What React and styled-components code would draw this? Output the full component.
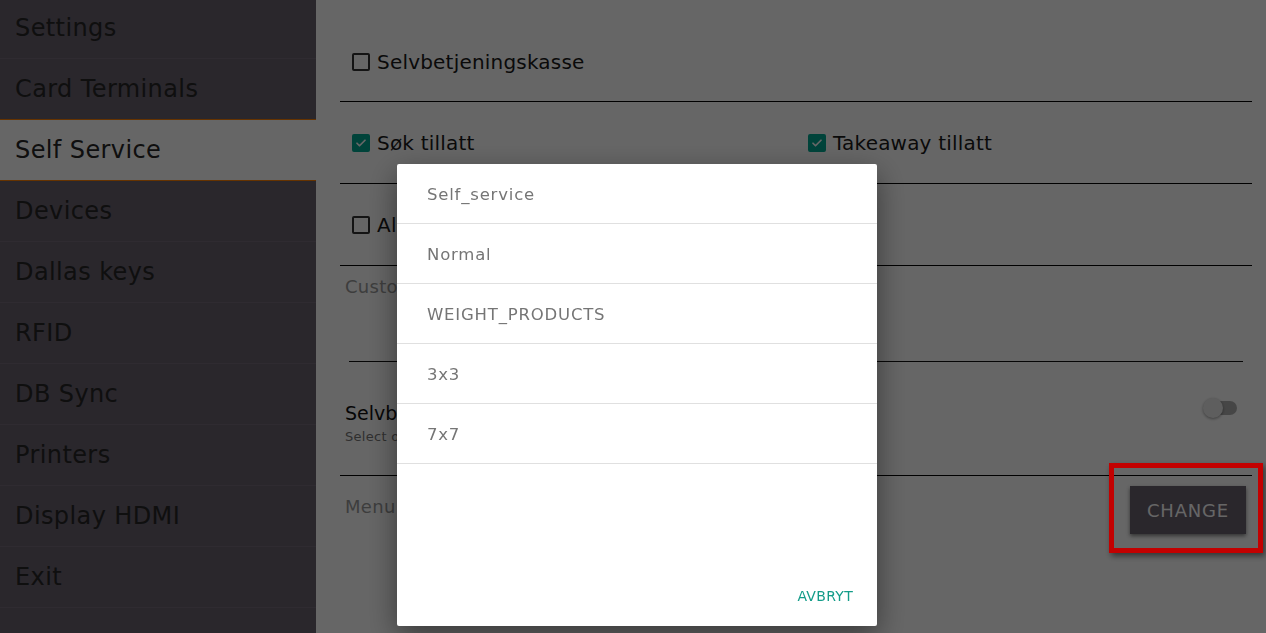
import React from 'react'
import styled, { createGlobalStyle } from 'styled-components'

const GlobalStyle = createGlobalStyle`
    body {
        margin: 0;
        font-family: "DejaVu Sans", "Noto Sans", sans-serif;
        overflow: hidden;
    }
`

export const StyledPage = styled.div`
    display: flex;
    height: 633px;
    overflow: hidden;
    background: #fff;
`
export const StyledSidebar = styled.div`
    width: 316px;
    flex-shrink: 0;
    background: #69616f;
    display: flex;
    flex-direction: column;
    margin-top: -2px;
`
export const StyledNavItem = styled.div`
    box-sizing: border-box;
    display: flex;
    align-items: center;
    padding-left: 15px;
    font-size: 24px;
    letter-spacing: 0.4px;
    color: #262626;
    border-bottom: 1px solid ${p => (p.active ? '#ff8000' : '#756d7b')};
    border-top: ${p => (p.active ? '1px solid #ff8000' : 'none')};
    background: ${p => (p.active ? '#fff' : 'transparent')};
    margin-top: ${p => (p.active ? '-1px' : '0')};
    height: ${p => (p.active ? '62px' : '61px')};
`
export const StyledMain = styled.div`
    flex: 1;
    min-width: 0;
    padding: 0 14px 0 24px;
    display: flex;
    flex-direction: column;
`
export const StyledRow = styled.div`
    height: ${p => p.h || 82}px;
    display: flex;
    align-items: center;
    border-bottom: 1px solid #000;
    padding-left: 12px;
    padding-top: ${p => p.pt || 0}px;
    box-sizing: border-box;
`
export const StyledCheckItem = styled.label`
    display: flex;
    align-items: center;
    gap: 7px;
    flex: ${p => (p.wide ? '0 0 456px' : '1')};
    font-size: 20px;
    letter-spacing: 0.2px;
    color: #1a1a1a;
    white-space: nowrap;
`
export const StyledBox = styled.span`
    width: 14px;
    height: 14px;
    flex-shrink: 0;
    border-radius: 2px;
    border: 2px solid ${p => (p.checked ? '#00a892' : '#333')};
    background: ${p => (p.checked ? '#00a892' : 'transparent')};
    display: flex;
    align-items: center;
    justify-content: center;
`
export const StyledField = styled.div`
    height: 96px;
    padding: 10px 9px 0 5px;
    box-sizing: border-box;
    display: flex;
    flex-direction: column;
`
export const StyledFieldLabel = styled.div`
    font-size: 18px;
    letter-spacing: 0.3px;
    color: #9a9a9a;
    flex: ${p => (p.grow ? 1 : 'none')};
    margin-bottom: ${p => p.mb || 0}px;
`
export const StyledUnderline = styled.div`
    height: 1px;
    background: #111;
    margin-left: 4px;
`
export const StyledSwitchRow = styled.div`
    height: 114px;
    display: flex;
    align-items: center;
    justify-content: space-between;
    padding: 8px 15px 0 5px;
    border-bottom: 1px solid #000;
    box-sizing: border-box;
`
export const StyledTitle = styled.div`
    font-size: 19px;
    color: #111;
`
export const StyledSub = styled.div`
    font-size: 13px;
    letter-spacing: 0.3px;
    color: #777;
    margin-top: 5px;
`
export const StyledToggle = styled.div`
    position: relative;
    width: 32px;
    height: 14px;
    border-radius: 7px;
    background: #b0b0b0;
    margin-top: -30px;

    &::after {
        content: '';
        position: absolute;
        left: -2px;
        top: -3px;
        width: 20px;
        height: 20px;
        border-radius: 50%;
        background: #ececec;
        box-shadow: 0 1px 3px rgba(0, 0, 0, 0.4);
    }
`
export const StyledMenuRow = styled.div`
    display: flex;
    align-items: center;
    justify-content: space-between;
    padding: 10px 6px 0 5px;
`
export const StyledChange = styled.button`
    background: #69616f;
    color: #fff;
    border: none;
    height: 48px;
    width: 116px;
    font-family: inherit;
    font-size: 18px;
    letter-spacing: 0.8px;
    box-shadow: 0 2px 4px rgba(0, 0, 0, 0.5);
`
export const StyledOverlay = styled.div`
    position: fixed;
    inset: 0;
    background: rgba(0, 0, 0, 0.6);
`
export const StyledDialog = styled.div`
    position: fixed;
    left: 397px;
    top: 164px;
    width: 480px;
    height: 462px;
    background: #fff;
    border-radius: 2px;
    box-shadow: 0 10px 30px rgba(0, 0, 0, 0.45);
    display: flex;
    flex-direction: column;
`
export const StyledOption = styled.div`
    height: 60px;
    display: flex;
    align-items: center;
    padding-left: 30px;
    padding-top: 1px;
    font-size: 16.5px;
    letter-spacing: 0.8px;
    color: #757575;
    border-bottom: 1px solid #e0e0e0;
    box-sizing: border-box;
`
export const StyledActions = styled.div`
    flex: 1;
    display: flex;
    align-items: flex-end;
    justify-content: flex-end;
    padding: 0 24px 22px 0;
`
export const StyledTextButton = styled.span`
    font-size: 14px;
    color: #149c89;
    letter-spacing: 0.3px;
`
export const StyledHighlight = styled.div`
    position: fixed;
    left: 1109px;
    top: 463px;
    width: 144px;
    height: 80px;
    border: 5px solid #c30000;
    box-shadow: 2px 3px 6px rgba(0, 0, 0, 0.5);
`

const navItems = ['Settings', 'Card Terminals', 'Self Service', 'Devices', 'Dallas keys', 'RFID', 'DB Sync', 'Printers', 'Display HDMI', 'Exit']
const options = ['Self_service', 'Normal', 'WEIGHT_PRODUCTS', '3x3', '7x7']

const Check = () => (
    <svg width="12" height="12" viewBox="0 0 24 24" fill="none" stroke="#fff" strokeWidth="3.5" strokeLinecap="round" strokeLinejoin="round">
        <path d="M4 12.5l5 5L20 6.5" />
    </svg>
)

const CheckItem = ({ checked, wide, children }) => (
    <StyledCheckItem wide={wide}>
        <StyledBox checked={checked}>{checked && <Check />}</StyledBox>
        {children}
    </StyledCheckItem>
)

const App = () => {
    return (
        <>
            <GlobalStyle />
            <StyledPage>
                <StyledSidebar>
                    {navItems.map(item => (
                        <StyledNavItem key={item} active={item === 'Self Service'}>{item}</StyledNavItem>
                    ))}
                </StyledSidebar>
                <StyledMain>
                    <StyledRow h={102} pt={22}>
                        <CheckItem>Selvbetjeningskasse</CheckItem>
                    </StyledRow>
                    <StyledRow>
                        <CheckItem checked wide>Søk tillatt</CheckItem>
                        <CheckItem checked>Takeaway tillatt</CheckItem>
                    </StyledRow>
                    <StyledRow>
                        <CheckItem>Alltid takeaway</CheckItem>
                    </StyledRow>
                    <StyledField>
                        <StyledFieldLabel grow>Customer display</StyledFieldLabel>
                        <StyledUnderline />
                    </StyledField>
                    <StyledSwitchRow>
                        <div>
                            <StyledTitle>Selvbetjening modus</StyledTitle>
                            <StyledSub>Select one of the modes</StyledSub>
                        </div>
                        <StyledToggle />
                    </StyledSwitchRow>
                    <StyledMenuRow>
                        <StyledFieldLabel mb={8}>Menu</StyledFieldLabel>
                        <StyledChange>CHANGE</StyledChange>
                    </StyledMenuRow>
                </StyledMain>
            </StyledPage>
            <StyledOverlay />
            <StyledDialog>
                {options.map(o => (
                    <StyledOption key={o}>{o}</StyledOption>
                ))}
                <StyledActions>
                    <StyledTextButton>AVBRYT</StyledTextButton>
                </StyledActions>
            </StyledDialog>
            <StyledHighlight />
        </>
    )
}

export default App
